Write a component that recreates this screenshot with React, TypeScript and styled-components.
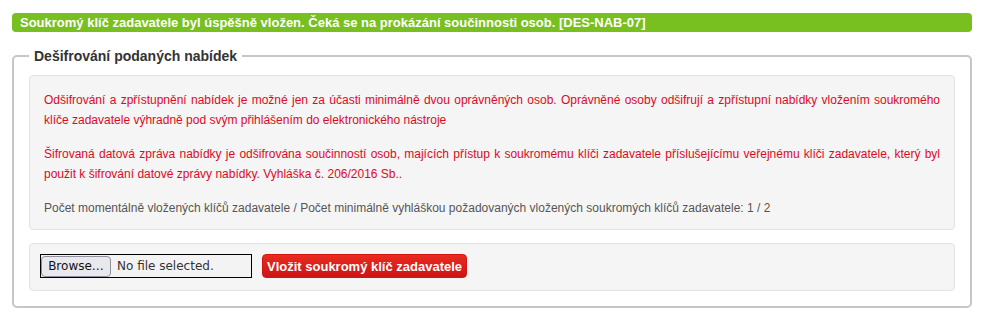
import React from 'react';
import styled, { createGlobalStyle } from 'styled-components';

const GlobalStyle = createGlobalStyle`
  html, body {
    margin: 0;
    padding: 0;
    background: #fff;
    font-family: "Liberation Sans", Arial, sans-serif;
  }
`;

const Page = styled.div`
  padding: 13px 9px 0 12px;
`;

const SuccessBar = styled.div`
  background: #77c01f;
  color: #fff;
  font-size: 13px;
  font-weight: 700;
  line-height: 19px;
  height: 19px;
  padding: 0 8px;
  border-radius: 4px;
  white-space: nowrap;
`;

const Fieldset = styled.fieldset`
  margin: 14px 0 0 0;
  padding: 9px 15px 15px;
  border: 2px solid #c6c6c6;
  border-radius: 5px;
  min-width: 0;
`;

const Legend = styled.legend`
  padding: 0 5px;
  margin-left: 0;
  font-size: 14px;
  font-weight: 700;
  line-height: 20px;
  color: #333;
`;

const Well = styled.div<{ $pad: string }>`
  background: #f5f5f5;
  border: 1px solid #e3e3e3;
  border-radius: 4px;
  padding: ${p => p.$pad};
  & + & {
    margin-top: 13px;
  }
`;

const Notice = styled.p<{ $muted?: boolean }>`
  margin: 0;
  font-size: 12px;
  line-height: 20px;
  text-align: justify;
  color: ${p => (p.$muted ? '#555' : '#dd0a1e')};
  & + & {
    margin-top: ${p => (p.$muted ? '14px' : '13px')};
  }
`;

const UploadRow = styled.div`
  display: flex;
  align-items: center;
  gap: 10px;
`;

const FileBox = styled.label`
  display: flex;
  align-items: center;
  box-sizing: border-box;
  width: 212px;
  height: 24px;
  border: 1px solid #000;
  background: #f3f3f3;
  font-family: "DejaVu Sans", "Noto Sans", sans-serif;
  font-size: 12px;
  color: #222;
  cursor: default;
`;

const BrowseButton = styled.span`
  box-sizing: border-box;
  width: 70px;
  height: 21px;
  padding: 0 6px;
  display: flex;
  align-items: center;
  justify-content: center;
  background: #e9e9ed;
  border: 1px solid #8f8f9d;
  border-radius: 4px;
  color: #111;
`;

const FileName = styled.span`
  margin-left: 6px;
  color: #333;
`;

const SubmitButton = styled.button`
  height: 24px;
  padding: 0 4px;
  border: 1px solid #d51414;
  border-radius: 4px;
  background: linear-gradient(#e92a20, #cd1515);
  color: #fff;
  font-family: "Liberation Sans", Arial, sans-serif;
  font-size: 13px;
  font-weight: 700;
  cursor: pointer;
`;

export default function App() {
  return (
    <Page>
      <GlobalStyle />
      <SuccessBar>
        Soukromý klíč zadavatele byl úspěšně vložen. Čeká se na prokázání součinnosti osob. [DES-NAB-07]
      </SuccessBar>
      <Fieldset>
        <Legend>Dešifrování podaných nabídek</Legend>
        <Well $pad="14px 14px 11px">
          <Notice>
            Odšifrování a zpřístupnění nabídek je možné jen za účasti minimálně dvou oprávněných osob. Oprávněné
            osoby odšifrují a zpřístupní nabídky vložením soukromého klíče zadavatele výhradně pod svým přihlášením
            do elektronického nástroje
          </Notice>
          <Notice>
            Šifrovaná datová zpráva nabídky je odšifrována součinností osob, majících přístup k soukromému klíči
            zadavatele příslušejícímu veřejnému klíči zadavatele, který byl použit k šifrování datové zprávy nabídky.
            Vyhláška č. 206/2016 Sb..
          </Notice>
          <Notice $muted>
            Počet momentálně vložených klíčů zadavatele / Počet minimálně vyhláškou požadovaných vložených soukromých
            klíčů zadavatele: 1 / 2
          </Notice>
        </Well>
        <Well $pad="10px 10px 12px">
          <UploadRow>
            <FileBox>
              <BrowseButton>Browse…</BrowseButton>
              <FileName>No file selected.</FileName>
            </FileBox>
            <SubmitButton type="button">Vložit soukromý klíč zadavatele</SubmitButton>
          </UploadRow>
        </Well>
      </Fieldset>
    </Page>
  );
}
